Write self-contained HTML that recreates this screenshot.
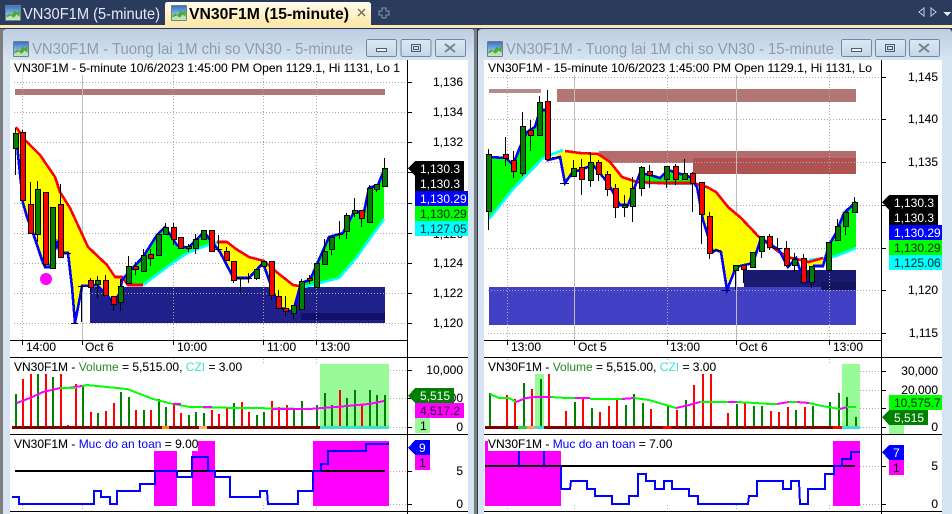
<!DOCTYPE html>
<html><head><meta charset="utf-8"><title>VN30F1M</title>
<style>
html,body{margin:0;padding:0;background:#2b3b5e;width:952px;height:514px;overflow:hidden}
svg{display:block}
text{font-family:"Liberation Sans",Arial,sans-serif;font-size:12px;fill:#000;stroke:#000;stroke-opacity:.3;stroke-width:.25}
tspan{stroke:none}
.ax{text-anchor:end}
.g{stroke:#aaa;stroke-width:1;stroke-dasharray:1 2;fill:none}
.l{fill:none;stroke-width:2;stroke-linejoin:miter}
.m{stroke-width:2.6}
.b{stroke:#000;stroke-width:1}
.k{stroke:#000;stroke-width:1;fill:none}
.tt{font-size:16px;fill:#8e9cab;stroke:none}
.w{fill:#fff;stroke:none}
</style></head><body>
<svg width="952" height="514" viewBox="0 0 952 514" xmlns="http://www.w3.org/2000/svg" shape-rendering="crispEdges">
<defs>
<linearGradient id="tb" x1="0" y1="0" x2="0" y2="1"><stop offset="0" stop-color="#bccee0"/><stop offset="1" stop-color="#d7e4f2"/></linearGradient>
<linearGradient id="at" x1="0" y1="0" x2="0" y2="1"><stop offset="0" stop-color="#fffdf0"/><stop offset="1" stop-color="#ffe8a6"/></linearGradient>
<linearGradient id="bt" x1="0" y1="0" x2="0" y2="1"><stop offset="0" stop-color="#dce8f4"/><stop offset="1" stop-color="#c6d6e6"/></linearGradient>
<linearGradient id="sky" x1="0" y1="0" x2="0" y2="1"><stop offset="0" stop-color="#2f6fc4"/><stop offset="1" stop-color="#d4ecfa"/></linearGradient>
<g id="ic"><rect x="0" y="0" width="15" height="15" rx="1" fill="url(#sky)" stroke="#6d7f93" stroke-width="1"/><path d="M1 14V10L4 8L6 10L9 5L11 7L14 4V14Z" fill="#4fa83d"/><path d="M1 14V12L5 10L8 12L11 9L14 11V14Z" fill="#b8e6a0"/></g>
<g id="btn"><rect x=".5" y=".5" width="30" height="17" rx="2" fill="url(#bt)" stroke="#75879d"/></g>
</defs>

<!-- top bar -->
<rect width="952" height="514" fill="#2b3b5e"/>
<rect x="0" y="25" width="952" height="3" fill="#f9e9b4"/>
<rect x="0" y="28" width="952" height="1" fill="#2b3b5e"/>
<use href="#ic" x="5.5" y="5.5"/>
<text x="23" y="19" style="font-size:16px;fill:#e4eaf3;stroke:none" textLength="137" lengthAdjust="spacingAndGlyphs">VN30F1M (5-minute)</text>
<path d="M168 2H368Q371 2 371 5V25H165V5Q165 2 168 2Z" fill="url(#at)"/>
<use href="#ic" x="171.5" y="5.5"/>
<text x="189" y="19" style="font-size:16px;font-weight:bold;stroke:none" textLength="160" lengthAdjust="spacingAndGlyphs">VN30F1M (15-minute)</text>
<path d="M358 9L365 16M365 9L358 16" stroke="#6e6a5e" stroke-width="1.4" fill="none" shape-rendering="auto"/>
<path d="M382 8h4v3h3v4h-3v3h-4v-3h-3v-4h3z" fill="none" stroke="#8794aa"/>
<path d="M924 8L919 12L924 16Z" fill="none" stroke="#c9d1de"/>
<path d="M931 8L936 12L931 16Z" fill="none" stroke="#c9d1de"/>
<path d="M943 12H951L947 16Z" fill="#e8edf4"/>

<!-- window frames -->
<rect x="0" y="29" width="477" height="485" fill="#7d7d80"/>
<path d="M3 514V33Q3 29 7 29H471Q474 29 474 33V514Z" fill="#d6e4f2"/>
<path d="M3 60V33Q3 29 7 29H471Q474 29 474 33V60Z" fill="url(#tb)"/>
<path d="M478 514V33Q478 29 482 29H948Q952 29 952 33V514Z" fill="#d6e4f2"/>
<path d="M478 60V33Q478 29 482 29H948Q952 29 952 33V60Z" fill="url(#tb)"/>

<use href="#ic" x="13.5" y="41.5"/>
<text x="32" y="54" class="tt" textLength="321" lengthAdjust="spacingAndGlyphs">VN30F1M - Tuong lai 1M chi so VN30 - 5-minute</text>
<use href="#btn" x="366" y="39"/><use href="#btn" x="400.5" y="39"/><use href="#btn" x="435" y="39"/>
<rect x="376.5" y="48.5" width="10" height="3" fill="#eef3f8" stroke="#4d5d70"/>
<rect x="411.5" y="44.5" width="9" height="7" fill="none" stroke="#4d5d70"/><rect x="413.5" y="46.5" width="5" height="3" fill="none" stroke="#4d5d70"/>
<path d="M445 44L455 52M455 44L445 52" stroke="#75848f" stroke-width="2" fill="none" shape-rendering="auto"/>

<use href="#ic" x="487.5" y="41.5"/>
<text x="506" y="54" class="tt" textLength="328" lengthAdjust="spacingAndGlyphs">VN30F1M - Tuong lai 1M chi so VN30 - 15-minute</text>
<use href="#btn" x="841" y="39"/><use href="#btn" x="875" y="39"/><use href="#btn" x="909" y="39"/>
<rect x="851.5" y="48.5" width="10" height="3" fill="#eef3f8" stroke="#4d5d70"/>
<rect x="885.5" y="44.5" width="9" height="7" fill="none" stroke="#4d5d70"/><rect x="887.5" y="46.5" width="5" height="3" fill="none" stroke="#4d5d70"/>
<path d="M919 44L929 52M929 44L919 52" stroke="#75848f" stroke-width="2" fill="none" shape-rendering="auto"/>

<!-- chart white -->
<rect x="10" y="60" width="458" height="454" fill="#fff"/>
<rect x="484" y="60" width="458" height="454" fill="#fff"/>

<!-- LEFT MAIN -->
<rect x="15" y="89" width="370" height="6" fill="#b27674"/>
<rect x="90" y="287" width="295" height="36" fill="#20208a"/>
<rect x="301" y="313" width="84" height="7" fill="#10106b"/>
<path class="g" d="M14 82.5H407M14 112.5H407M14 142.5H407M14 172.5H407M14 203.5H407M14 233.5H407M14 263.5H407M14 293.5H407M14 323.5H407M22.5 75V340M173.5 75V340M263.5 75V340M316.5 75V340"/>
<path d="M82.5 75V340" stroke="#bdbdbd"/>
<polygon fill="#ffff00" points="16,127 25,140 40,155 55,177 60,192 70,208 88,247 107,265 115,277 122,277 128,285 122,280 120,293 113,303 107,295 97,285 82,286 80,297 75,323 72,287 68,253 60,253 57,243 50,267 45,267 42,260 32,230 27,217 23,203 16,135"/>
<polygon fill="#00ff00" points="122,280 129,272 143,257 157,235 165,227 177,245 188,248 204,232 217,243 213,243 187,253 167,267 143,285 128,285"/>
<polygon fill="#ffff00" points="217,242 227,242 236,249 249,257 264,261 264,263 249,278 236,278 233,277 220,252"/>
<polygon fill="#ffff00" points="264,261 274,270 293,285 299,286 293,312 279,307 269,280 264,263"/>
<polygon fill="#00ff00" points="301,283 310,280 329,237 343,233 354,212 364,212 369,188 378,185 384,170 384,218 356,257 339,277 304,286"/>
<polyline class="l m" stroke="#00ffff" points="143,285 167,267 187,253 213,243 217,243"/>
<polyline class="l m" stroke="#00ffff" points="304,287 339,278 356,258 384,219"/>
<polyline class="l m" stroke="#ff0000" points="16,127 25,140 40,155 55,177 60,192 70,208 88,247 107,265 115,277 122,277 128,285 143,285"/>
<polyline class="l m" stroke="#ff0000" points="217,242 227,242 236,249 249,257 264,261 274,270 293,285 299,286"/>
<polyline class="l m" stroke="#0000ff" points="16,135 23,203 27,217 32,230 42,260 45,267 50,267 57,243 60,253 68,253 72,287 75,323 80,297 82,286 97,285 107,295 113,303 120,293 122,280 129,272 143,257 157,235 165,227 177,245 188,248 204,232 220,252 233,277 236,278 249,278 263,263 269,280 279,307 293,312 301,283 310,280 329,237 343,233 354,212 364,212 369,188 378,185 384,170"/>
<circle cx="46" cy="279" r="6" fill="#ff00ff" shape-rendering="auto"/>
<path class="k" transform="translate(-1 0)" d="M16.5 128V175M23.5 130V200M31.5 182V233M38.5 181V242M46.5 192V267M53.5 207V268M61.5 184V257M65 253.5H72M72 323.5H79M79 286.5H86M82.5 286V322M91.5 278V292M98.5 276V298M106.5 275V295M114.5 296V311M121.5 279V311M129.5 256V283M136.5 262V275M144.5 249V271M151.5 249V266M159.5 234V255M166.5 223V234M174.5 223V245M181.5 237V248M189.5 244V252M196.5 234V254M204.5 230V239M212.5 230V251M219.5 235V252M216 249.5H223M227.5 247V260M234.5 261V283M241.5 278V292M238 278.5H245M249.5 273V283M246 278.5H253M257.5 269V280M264.5 261V266M272.5 261V300M279.5 290V308M286.5 296V316M294.5 305V319M302.5 279V309M310.5 275V284M317.5 263V287M325.5 239V264M332.5 237V255M340.5 221V239M336 234.5H344M347.5 213V239M355.5 198V217M362.5 210V227M370.5 185V222M377.5 184V192M385.5 158V186"/>
<path class="b" fill="#008000" d="M13.5 133.5h5V148.5h-5zM35.5 189.5h5V234.5h-5zM50.5 207.5h5V268.5h-5zM95.5 280.5h5V284.5h-5zM118.5 286.5h5V302.5h-5zM126.5 266.5h5V283.5h-5zM141.5 255.5h5V271.5h-5zM156.5 234.5h5V255.5h-5zM163.5 227.5h5V234.5h-5zM186.5 246.5h5V248.5h-5zM193.5 239.5h5V248.5h-5zM201.5 230.5h5V239.5h-5zM254.5 269.5h5V278.5h-5zM261.5 261.5h5V266.5h-5zM291.5 305.5h5V313.5h-5zM299.5 281.5h5V309.5h-5zM314.5 263.5h5V287.5h-5zM322.5 251.5h5V264.5h-5zM329.5 237.5h5V249.5h-5zM344.5 215.5h5V231.5h-5zM352.5 210.5h5V213.5h-5zM367.5 188.5h5V222.5h-5zM374.5 184.5h5V189.5h-5zM382.5 168.5h5V186.5h-5z"/>
<path class="b" fill="#ff0000" d="M20.5 132.5h5V200.5h-5zM28.5 204.5h5V233.5h-5zM43.5 192.5h5V264.5h-5zM58.5 204.5h5V257.5h-5zM88.5 280.5h5V287.5h-5zM103.5 280.5h5V295.5h-5zM111.5 296.5h5V304.5h-5zM133.5 266.5h5V269.5h-5zM148.5 254.5h5V258.5h-5zM171.5 227.5h5V239.5h-5zM178.5 237.5h5V248.5h-5zM209.5 230.5h5V251.5h-5zM224.5 251.5h5V260.5h-5zM231.5 261.5h5V280.5h-5zM269.5 261.5h5V295.5h-5zM276.5 296.5h5V308.5h-5zM283.5 308.5h5V311.5h-5zM307.5 278.5h5V280.5h-5zM359.5 210.5h5V218.5h-5z"/>

<!-- RIGHT MAIN -->
<rect x="489" y="89" width="52" height="4" fill="#b78b8b"/>
<rect x="557" y="89" width="299" height="13" fill="#b27674"/>
<rect x="599" y="151" width="257" height="12" fill="#b36b6b"/>
<rect x="693" y="158" width="163" height="16" fill="#b15252"/>
<rect x="489" y="287" width="367" height="38" fill="#4240c5"/>
<rect x="744" y="270" width="112" height="17" fill="#1a1a70"/>
<rect x="821" y="282" width="35" height="8" fill="#15155f"/>
<path class="g" d="M488 77.5H881M488 119.5H881M488 162.5H881M488 205.5H881M488 248.5H881M488 290.5H881M488 333.5H881M507.5 75V340M667.5 75V340M829.5 75V340"/>
<path d="M574.5 75V340M736.5 75V340" stroke="#bdbdbd"/>
<polygon fill="#00ff00" points="489,157 506,158 513,165 520,147 527,132 535,127 540,110 548,110 548,159 543,158 513,188 489,218"/>
<polygon fill="#ffff00" points="555,156 563,151 580,153 598,154 610,162 622,177 636,182 628,205 620,205 608,183 593,165 572,173 565,183 560,157"/>
<polygon fill="#00ff00" points="640,175 650,175 660,178 668,170 690,177 693,183 640,183"/>
<polygon fill="#ffff00" points="693,183 707,187 716,192 728,207 741,218 759,237 753,263 736,267 727,290 721,252 716,250 713,252 703,220 697,187"/>
<polygon fill="#ffff00" points="801,261 823,258 823,266 808,266"/>
<polygon fill="#00ff00" points="825,266 829,245 836,233 844,213 856,202 856,247 836,255 824,257"/>
<polyline class="l m" stroke="#00ffff" points="489,219 513,189 543,158 563,150"/>
<polyline class="l m" stroke="#00ffff" points="640,183 693,184"/>
<polyline class="l m" stroke="#00ffff" points="809,260 824,258 836,256 856,248"/>
<polyline class="l m" stroke="#ff0000" points="565,151 580,153 598,154 610,162 622,177 637,182 658,183 693,183 707,187 716,192 728,207 741,218 759,237 779,252 791,258 801,260 809,262 823,258"/>
<polyline class="l m" stroke="#0000ff" points="489,157 506,158 513,165 520,147 527,132 535,127 540,110 548,110 548,160 560,157 565,183 572,173 593,165 608,183 620,205 628,205 640,173 650,175 660,178 668,170 690,177 697,187 703,220 713,252 716,250 721,252 727,290 736,267 753,263 761,238 779,250 788,267 796,258 804,282 812,282 814,266 823,266 829,245 836,233 844,213 856,202"/>
<path class="k" transform="translate(-1 0)" d="M489.5 149V230M506.5 137V166M514.5 151V178M523.5 112V176M531.5 120V151M540.5 96V135M548.5 90V159M553 157.5H561M561 183.5H570M574.5 160V176M582.5 159V195M591.5 152V187M599.5 160V181M608.5 171V196M616.5 184V218M625.5 195V217M633.5 177V222M642.5 166V196M650.5 165V188M667.5 166V188M676.5 164V185M685.5 159V179M693.5 172V212M702.5 182V244M710.5 212V259M712 250.5H722M723 290.5H731M736.5 265V290M744.5 265V283M753.5 252V267M762.5 236V258M770.5 234V250M778.5 238V250M774 248.5H783M787.5 241V267M795.5 253V272M804.5 254V282M812.5 266V288M829.5 242V270M838.5 219V240M846.5 212V235M855.5 197V212"/>
<path class="b" fill="#008000" d="M486.5 154.5h5V211.5h-5zM520.5 126.5h5V173.5h-5zM537.5 102.5h5V135.5h-5zM571.5 168.5h5V176.5h-5zM588.5 162.5h5V180.5h-5zM622.5 205.5h5V207.5h-5zM630.5 188.5h5V206.5h-5zM639.5 167.5h5V188.5h-5zM664.5 166.5h5V179.5h-5zM682.5 173.5h5V179.5h-5zM733.5 265.5h5V270.5h-5zM750.5 252.5h5V267.5h-5zM759.5 236.5h5V251.5h-5zM792.5 259.5h5V265.5h-5zM809.5 266.5h5V282.5h-5zM826.5 242.5h5V270.5h-5zM835.5 226.5h5V240.5h-5zM843.5 212.5h5V226.5h-5zM852.5 202.5h5V212.5h-5z"/>
<path class="b" fill="#ff0000" d="M503.5 154.5h5V158.5h-5zM511.5 160.5h5V171.5h-5zM528.5 130.5h5V135.5h-5zM545.5 101.5h5V159.5h-5zM579.5 167.5h5V179.5h-5zM596.5 162.5h5V174.5h-5zM605.5 174.5h5V189.5h-5zM613.5 188.5h5V207.5h-5zM647.5 171.5h5V175.5h-5zM673.5 166.5h5V179.5h-5zM690.5 173.5h5V183.5h-5zM699.5 182.5h5V214.5h-5zM707.5 216.5h5V253.5h-5zM741.5 265.5h5V269.5h-5zM767.5 236.5h5V247.5h-5zM784.5 248.5h5V265.5h-5zM801.5 258.5h5V282.5h-5z"/>

<!-- LEFT VOLUME -->
<rect x="320" y="364" width="69" height="62" fill="#98fb98"/>
<rect x="12" y="426" width="308" height="3" fill="#800000"/>
<rect x="162" y="426" width="7" height="3" fill="#ff8c00"/>
<rect x="199" y="426" width="8" height="3" fill="#ffb060"/>
<rect x="320" y="426" width="69" height="3" fill="#40e0d0"/>
<path d="M23 379V426M31 374V426M46 374V426M61 374V426M68 425V426M76 384V426M91 412V426M106 411V426M114 403V426M136 410V426M151 410V426M174 403V426M181 413V426M212 410V426M219 414V426M227 407V426M242 402V426M249 412V426M272 401V426M279 407V426M287 405V426M340 390V426M362 404V426" stroke="#ff0000" stroke-width="2" fill="none"/>
<path d="M16 394V426M38 374V426M53 377V426M83 385V426M98 413V426M121 392V426M129 397V426M144 410V426M159 399V426M166 407V426M189 415V426M196 412V426M204 413V426M234 403V426M257 415V426M264 412V426M294 410V426M302 401V426M317 405V426M325 393V426M332 405V426M347 398V426M355 390V426M370 390V426M377 395V426M385 395V426" stroke="#008000" stroke-width="2" fill="none"/>
<polyline class="l" stroke="#ff00ff" points="17,403 30,398 43,392 60,388 68,388 82,386"/>
<polyline class="l" stroke="#00ff00" points="60,388 76,388"/>
<polyline class="l" stroke="#00ff00" points="82,386 87,385 107,387 127,389 140,394 153,399 173,404 190,407 240,408 249,408 309,409"/>
<polyline class="l" stroke="#ff00ff" points="173,404 181,404"/>
<polyline class="l" stroke="#ff00ff" points="203,407 212,407"/>
<polyline class="l" stroke="#ff00ff" points="272,409 309,409 336,407 369,404 384,401"/>
<path class="g" d="M390 370.5H407M390 398.5H407M390 427.5H407M22.5 358V362M82.5 358V362M173.5 358V362M263.5 359V364M316.5 359V364M390 471.5H407M390 504.5H407M22.5 505V509M82.5 505V509M173.5 505V509M263.5 505V509M316.5 505V509"/>
<text x="14" y="371">VN30F1M - <tspan fill="#228b22">Volume</tspan> = 5,515.00, <tspan fill="#40e0d0">CZI</tspan> = 3.00</text>

<!-- LEFT IND -->
<rect x="154" y="451" width="23" height="55" fill="#ff00ff"/>
<rect x="198" y="441" width="17" height="10" fill="#ff00ff"/>
<rect x="192" y="451" width="23" height="55" fill="#ff00ff"/>
<rect x="313" y="441" width="76" height="65" fill="#ff00ff"/>
<rect x="15" y="470" width="370" height="2" fill="#000"/>
<polyline class="l" stroke="#0000ff" points="12,497 19,497 19,504 94,504 94,491 101,491 101,497 110,497 110,504 117,504 117,491 140,491 140,484 155,484 155,471 177,471 177,477 192,477 192,457 208,457 208,471 215,471 215,477 230,477 230,497 260,497 260,491 267,491 268,504 298,504 298,491 313,491 313,471 321,471 321,464 328,464 328,451 366,451 366,444 389,444"/>
<text x="14" y="448">VN30F1M - <tspan fill="#0000ff">Muc do an toan</tspan> = 9.00</text>

<!-- RIGHT VOLUME -->
<rect x="535" y="374" width="9" height="52" fill="#98fb98"/>
<rect x="842" y="364" width="18" height="62" fill="#98fb98"/>
<rect x="485" y="426" width="357" height="3" fill="#800000"/>
<rect x="518" y="426" width="9" height="3" fill="#32cd32"/>
<rect x="527" y="426" width="8" height="3" fill="#ffa060"/>
<rect x="535" y="426" width="9" height="3" fill="#40e0d0"/>
<rect x="663" y="426" width="8" height="3" fill="#ff0000"/>
<rect x="833" y="426" width="9" height="3" fill="#ff0000"/>
<rect x="842" y="426" width="18" height="3" fill="#40e0d0"/>
<path d="M507 395V426M515 399V426M532 389V426M549 374V426M566 411V426M583 398V426M600 412V426M609 406V426M617 400V426M651 409V426M677 410V426M694 385V426M703 374V426M711 374V426M728 413V426M745 403V426M771 411V426M779 412V426M788 407V426M805 407V426" stroke="#ff0000" stroke-width="2" fill="none"/>
<path d="M490 393V426M524 383V426M541 379V426M575 402V426M592 408V426M626 405V426M634 394V426M643 403V426M668 406V426M686 400V426M737 404V426M754 406V426M762 406V426M796 410V426M813 406V426M830 402V426M839 393V426M847 397V426M856 417V426" stroke="#008000" stroke-width="2" fill="none"/>
<polyline class="l" stroke="#00ff00" points="490,394 499,398 509,398 516,402"/>
<polyline class="l" stroke="#ff00ff" points="516,402 526,398 536,397 551,397"/>
<polyline class="l" stroke="#00ff00" points="551,397 566,398 575,398"/>
<polyline class="l" stroke="#ff00ff" points="575,398 590,398"/>
<polyline class="l" stroke="#00ff00" points="590,399 622,399"/>
<polyline class="l" stroke="#ff00ff" points="622,399 634,398"/>
<polyline class="l" stroke="#00ff00" points="634,398 649,400 666,405 676,408"/>
<polyline class="l" stroke="#ff00ff" points="676,408 689,405 700,402"/>
<polyline class="l" stroke="#00ff00" points="700,402 712,402 728,402"/>
<polyline class="l" stroke="#ff00ff" points="728,402 737,402"/>
<polyline class="l" stroke="#00ff00" points="737,402 755,403 770,404 777,404"/>
<polyline class="l" stroke="#ff00ff" points="777,404 789,402"/>
<polyline class="l" stroke="#00ff00" points="789,402 797,402"/>
<polyline class="l" stroke="#ff00ff" points="797,402 809,403"/>
<polyline class="l" stroke="#00ff00" points="809,403 822,406 840,409"/>
<polyline class="l" stroke="#ff00ff" points="840,409 847,407"/>
<polyline class="l" stroke="#00ff00" points="847,407 856,407"/>
<path class="g" d="M860 371.5H881M860 390.5H881M860 408.5H881M860 427.5H881M860 466.5H881M860 504.5H881M507.5 359V363M667.5 359V363M829.5 359V363M507.5 505V509M574.5 505V509M667.5 505V509M736.5 505V509M829.5 505V509"/>
<text x="488" y="371">VN30F1M - <tspan fill="#228b22">Volume</tspan> = 5,515.00, <tspan fill="#40e0d0">CZI</tspan> = 3.00</text>

<!-- RIGHT IND -->
<rect x="485" y="451" width="76" height="55" fill="#ff00ff"/>
<rect x="485" y="441" width="3" height="10" fill="#ff00ff"/>
<rect x="833" y="441" width="27" height="65" fill="#ff00ff"/>
<rect x="485" y="465" width="370" height="2" fill="#000"/>
<path d="M519 451V466M544 451V466" stroke="#0000ff" stroke-width="2" fill="none"/>
<polyline class="l" stroke="#0000ff" points="561,466 561,489 570,489 571,481 587,481 587,489 595,489 595,496 612,496 612,504 629,504 629,496 638,496 638,474 646,474 646,481 655,481 655,489 664,489 664,481 672,481 672,489 689,489 689,496 698,496 698,504 748,504 749,496 757,496 757,481 783,481 783,489 791,489 791,481 799,481 800,504 808,504 808,489 825,489 825,474 834,474 834,466 842,466 842,459 851,459 851,452 860,452"/>
<text x="488" y="448">VN30F1M - <tspan fill="#0000ff">Muc do an toan</tspan> = 7.00</text>

<!-- headers -->
<text x="14" y="72" textLength="386" lengthAdjust="spacingAndGlyphs">VN30F1M - 5-minute 10/6/2023 1:45:00 PM Open 1129.1, Hi 1131, Lo 1</text>
<text x="488" y="72" textLength="384" lengthAdjust="spacingAndGlyphs">VN30F1M - 15-minute 10/6/2023 1:45:00 PM Open 1129.1, Hi 1131, Lo</text>

<!-- axes lines -->
<path class="k" d="M407.5 60V514M881.5 60V514M10 340.5H407M484 340.5H881M10 357.5H468M484 357.5H942M10 434.5H468M484 434.5H942M10 511.5H468M484 511.5H942"/>
<path class="k" d="M22.5 340V345M82.5 340V345M173.5 340V345M263.5 340V345M316.5 340V345M507.5 340V345M574.5 340V345M667.5 340V345M736.5 340V345M829.5 340V345"/>
<path class="k" d="M407 82.5H412M407 112.5H412M407 142.5H412M407 172.5H412M407 203.5H412M407 233.5H412M407 263.5H412M407 293.5H412M407 323.5H412M407 370.5H412M407 398.5H412M407 427.5H412M407 471.5H412M407 504.5H412M881 77.5H886M881 119.5H886M881 162.5H886M881 205.5H886M881 248.5H886M881 290.5H886M881 333.5H886M881 371.5H886M881 390.5H886M881 408.5H886M881 427.5H886M881 466.5H886M881 504.5H886"/>

<!-- time labels -->
<text x="26" y="351">14:00</text><text x="85" y="351">Oct 6</text><text x="177" y="351">10:00</text><text x="267" y="351">11:00</text><text x="320" y="351">13:00</text>
<text x="511" y="351">13:00</text><text x="578" y="351">Oct 5</text><text x="670" y="351">13:00</text><text x="739" y="351">Oct 6</text><text x="833" y="351">13:00</text>

<!-- axis labels -->
<g class="ax">
<text x="463" y="86">1,136</text><text x="463" y="116">1,134</text><text x="463" y="146">1,132</text><text x="463" y="238">1,126</text><text x="463" y="267">1,124</text><text x="463" y="297">1,122</text><text x="463" y="327">1,120</text>
<text x="463" y="374">10,000</text><text x="463" y="402">5,000</text><text x="463" y="431">0</text><text x="463" y="475">5</text><text x="463" y="508">0</text>
<text x="938" y="81">1,145</text><text x="938" y="123">1,140</text><text x="938" y="166">1,135</text><text x="938" y="294">1,120</text><text x="938" y="337">1,115</text>
<text x="938" y="375">30,000</text><text x="938" y="394">20,000</text><text x="938" y="431">0</text><text x="938" y="470">5</text><text x="938" y="508">0</text>
</g>

<!-- left price tags -->
<polygon points="408,168 415,161 415,176" fill="#000"/>
<rect x="415" y="161" width="49" height="30" fill="#000"/>
<rect x="415" y="191" width="53" height="15" fill="#0000ff"/>
<rect x="415" y="206" width="53" height="15" fill="#00ff00"/>
<rect x="415" y="221" width="53" height="15" fill="#00ffff"/>
<text x="420" y="173" class="w">1,130.3</text>
<text x="420" y="188" class="w">1,130.3</text>
<text x="420" y="203" class="w">1,130.29</text>
<text x="420" y="218" style="fill:#08380b">1,130.29</text>
<text x="420" y="233" style="fill:#06383b">1,127.05</text>

<polygon points="408,396 415,388 415,403" fill="#008000"/>
<rect x="415" y="388" width="39" height="15" fill="#008000"/>
<rect x="415" y="403" width="49" height="15" fill="#ff00ff"/>
<rect x="415" y="418" width="15" height="15" fill="#98fb98"/>
<text x="420" y="400" class="w">5,515</text>
<text x="420" y="415" style="fill:#2a002a">4,517.2</text>
<text x="420" y="430">1</text>
<polygon points="408,448 415,440 415,455" fill="#0000ff"/>
<rect x="415" y="440" width="15" height="15" fill="#0000ff"/>
<rect x="415" y="455" width="15" height="15" fill="#ff00ff"/>
<text x="419" y="452" class="w">9</text>
<text x="419" y="467">1</text>

<!-- right price tags -->
<polygon points="882,202 889,195 889,210" fill="#000"/>
<rect x="889" y="195" width="49" height="30" fill="#000"/>
<rect x="889" y="225" width="53" height="15" fill="#0000ff"/>
<rect x="889" y="240" width="53" height="15" fill="#00ff00"/>
<rect x="889" y="255" width="53" height="15" fill="#00ffff"/>
<text x="894" y="207" class="w">1,130.3</text>
<text x="894" y="222" class="w">1,130.3</text>
<text x="894" y="237" class="w">1,130.29</text>
<text x="894" y="252" style="fill:#08380b">1,130.29</text>
<text x="894" y="267" style="fill:#06383b">1,125.06</text>

<rect x="889" y="425" width="15" height="9" fill="#98fb98"/>
<rect x="889" y="395" width="53" height="15" fill="#00ff00"/>
<polygon points="882,417 889,410 889,425" fill="#008000"/>
<rect x="889" y="410" width="39" height="15" fill="#008000"/>
<text x="894" y="407" style="fill:#063a06">10,575.7</text>
<text x="894" y="422" class="w">5,515</text>
<polygon points="882,452 889,445 889,460" fill="#0000ff"/>
<rect x="889" y="445" width="15" height="15" fill="#0000ff"/>
<rect x="889" y="460" width="15" height="15" fill="#ff00ff"/>
<text x="893" y="457" class="w">7</text>
<text x="893" y="472">1</text>
</svg>
</body></html>
